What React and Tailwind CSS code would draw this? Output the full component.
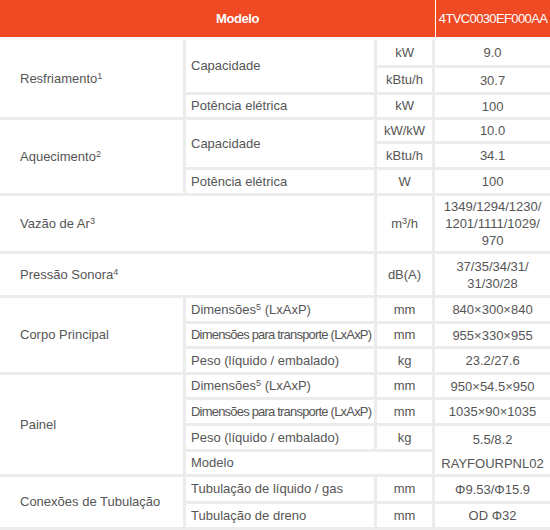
import React from "react";

const cellLine = "border-[#ececec]";

function Sup({ children }) {
  return <span className="text-[9px] align-[4px] leading-none">{children}</span>;
}

function Group({ rows, span, children }) {
  return (
    <td
      rowSpan={rows}
      colSpan={span}
      className={`border-b-[3px] border-r-[3px] ${cellLine} pl-5 align-middle`}
    >
      {children}
    </td>
  );
}

function Label({ rows, span, tight, children }) {
  return (
    <td
      rowSpan={rows}
      colSpan={span}
      className={`border-b-[3px] border-r-[3px] ${cellLine} pl-[5px] whitespace-nowrap ${
        tight ? "tracking-[-0.8px]" : ""
      }`}
    >
      {children}
    </td>
  );
}

function Unit({ children }) {
  return (
    <td className={`border-b-[3px] border-r-[3px] ${cellLine} text-center`}>
      {children}
    </td>
  );
}

function Value({ open, children }) {
  return (
    <td
      className={`${open ? "" : "border-b-[3px]"} ${cellLine} text-center leading-[17px]`}
    >
      {children}
    </td>
  );
}

export default function App() {
  return (
    <div
      className="w-[550px] h-[530px] bg-white overflow-hidden text-[13px] text-[#555]"
      style={{ fontFamily: '"Liberation Sans", Arial, sans-serif' }}
    >
      <table className="w-[550px] table-fixed border-separate border-spacing-0">
        <colgroup>
          <col className="w-[186px]" />
          <col className="w-[191px]" />
          <col className="w-[58px]" />
          <col className="w-[115px]" />
        </colgroup>
        <thead>
          <tr className="h-[40px]">
            <th
              colSpan={3}
              className="bg-[#f04a25] border-b-[3px] border-white text-white font-bold tracking-[-0.4px] text-center pl-[40px]"
            >
              Modelo
            </th>
            <th className="bg-[#f04a25] border-b-[3px] border-l border-white text-white font-normal tracking-[-0.62px] text-center whitespace-nowrap">
              4TVC0030EF000AA
            </th>
          </tr>
        </thead>
        <tbody>
          <tr className="h-[28px]">
            <Group rows={3}>
              Resfriamento<Sup>1</Sup>
            </Group>
            <Label rows={2}>Capacidade</Label>
            <Unit>kW</Unit>
            <Value>9.0</Value>
          </tr>
          <tr className="h-[27px]">
            <Unit>kBtu/h</Unit>
            <Value>30.7</Value>
          </tr>
          <tr className="h-[25px]">
            <Label>Potência elétrica</Label>
            <Unit>kW</Unit>
            <Value>100</Value>
          </tr>

          <tr className="h-[24px]">
            <Group rows={3}>
              Aquecimento<Sup>2</Sup>
            </Group>
            <Label rows={2}>Capacidade</Label>
            <Unit>kW/kW</Unit>
            <Value>10.0</Value>
          </tr>
          <tr className="h-[26px]">
            <Unit>kBtu/h</Unit>
            <Value>34.1</Value>
          </tr>
          <tr className="h-[26px]">
            <Label>Potência elétrica</Label>
            <Unit>W</Unit>
            <Value>100</Value>
          </tr>

          <tr className="h-[58px]">
            <Group span={2}>
              Vazão de Ar<Sup>3</Sup>
            </Group>
            <Unit>
              m<Sup>3</Sup>/h
            </Unit>
            <Value>
              1349/1294/1230/
              <br />
              1201/1111/1029/
              <br />
              970
            </Value>
          </tr>

          <tr className="h-[44px]">
            <Group span={2}>
              Pressão Sonora<Sup>4</Sup>
            </Group>
            <Unit>dB(A)</Unit>
            <Value>
              37/35/34/31/
              <br />
              31/30/28
            </Value>
          </tr>

          <tr className="h-[26px]">
            <Group rows={3}>Corpo Principal</Group>
            <Label>
              Dimensões<Sup>5</Sup> (LxAxP)
            </Label>
            <Unit>mm</Unit>
            <Value>840×300×840</Value>
          </tr>
          <tr className="h-[25px]">
            <Label tight>Dimensões para transporte (LxAxP)</Label>
            <Unit>mm</Unit>
            <Value>955×330×955</Value>
          </tr>
          <tr className="h-[26px]">
            <Label>Peso (líquido / embalado)</Label>
            <Unit>kg</Unit>
            <Value>23.2/27.6</Value>
          </tr>

          <tr className="h-[25px]">
            <Group rows={4}>Painel</Group>
            <Label>
              Dimensões<Sup>5</Sup> (LxAxP)
            </Label>
            <Unit>mm</Unit>
            <Value>950×54.5×950</Value>
          </tr>
          <tr className="h-[26px]">
            <Label tight>Dimensões para transporte (LxAxP)</Label>
            <Unit>mm</Unit>
            <Value>1035×90×1035</Value>
          </tr>
          <tr className="h-[26px]">
            <Label>Peso (líquido / embalado)</Label>
            <Unit>kg</Unit>
            <Value open>5.5/8.2</Value>
          </tr>
          <tr className="h-[25px]">
            <Label span={2}>Modelo</Label>
            <Value>RAYFOURPNL02</Value>
          </tr>

          <tr className="h-[27px]">
            <Group rows={2}>Conexões de Tubulação</Group>
            <Label>Tubulação de líquido / gas</Label>
            <Unit>mm</Unit>
            <Value>Φ9.53/Φ15.9</Value>
          </tr>
          <tr className="h-[26px]">
            <Label>Tubulação de dreno</Label>
            <Unit>mm</Unit>
            <Value>OD Φ32</Value>
          </tr>
        </tbody>
      </table>
    </div>
  );
}
